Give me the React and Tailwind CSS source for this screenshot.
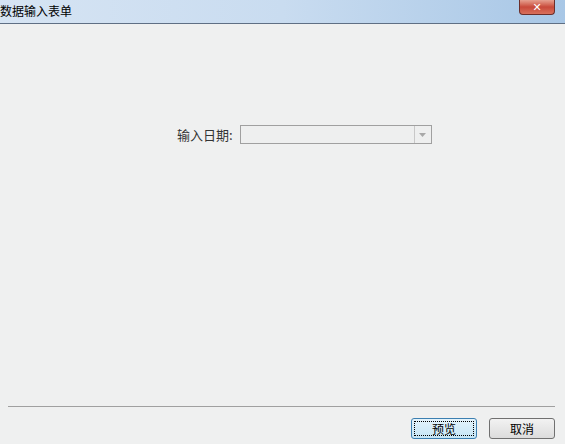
export default function App() {
  const font = { fontFamily: '"Noto Sans CJK SC", "Liberation Sans", sans-serif' };
  return (
    <div className="w-[565px] h-[444px] bg-[#eff0f0] flex flex-col overflow-hidden" style={font}>
      <div className="h-[24px] shrink-0 flex items-start justify-between bg-gradient-to-r from-[#d6e4f3] via-[#c9dcf0] to-[#a8c7e6] border-b border-[#5f6f84]">
        <div className="text-[12px] leading-[20px] text-black pl-0 pt-[1px]">数据输入表单</div>
        <div className="mr-[10px] w-[36px] h-[15px] rounded-b-[4px] border border-t-0 border-[#6b2e2a] bg-gradient-to-b from-[#e5a090] via-[#c8493a] to-[#d8705c] flex items-center justify-center">
          <span className="text-white text-[11px] font-bold leading-none" style={{ fontFamily: '"DejaVu Sans", sans-serif' }}>✕</span>
        </div>
      </div>
      <div className="flex-1 flex flex-col">
        <div className="h-[101px] shrink-0" />
        <div className="flex items-center pl-[177px] gap-[7px]">
          <span className="text-[13px] leading-[19px] text-[#333]">输入日期:</span>
          <div className="w-[192px] h-[19px] border border-[#a0a0a0] bg-[#eeefef] flex justify-end">
            <div className="w-[17px] h-full border-l border-[#c8c8c8] flex items-center justify-center">
              <svg width="7" height="4" viewBox="0 0 7 4"><path d="M0 0h7L3.5 4z" fill="#a8a8a8" /></svg>
            </div>
          </div>
        </div>
        <div className="flex-1" />
        <div className="ml-[8px] mr-[10px] h-[1px] shrink-0 bg-[#a0a0a0]" />
        <div className="h-[37px] shrink-0 flex items-start justify-end gap-[12px] pr-[10px] pt-[11px]">
          <button className="w-[66px] h-[21px] rounded-[3px] border border-[#3c7fb1] bg-gradient-to-b from-[#e5f4fc] to-[#c4e5f6] text-[12px] leading-none text-black flex items-center justify-center p-[2px]">
            <span className="w-full h-full border border-dotted border-black flex items-center justify-center">预览</span>
          </button>
          <button className="w-[66px] h-[21px] rounded-[3px] border border-[#707070] bg-gradient-to-b from-[#f2f2f2] to-[#dcdcdc] text-[12px] leading-none text-black flex items-center justify-center">
            取消
          </button>
        </div>
      </div>
    </div>
  );
}
